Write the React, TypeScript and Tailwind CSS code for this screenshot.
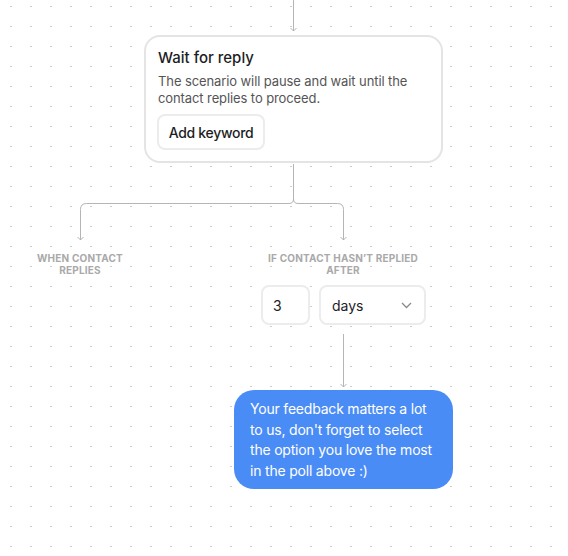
import React from "react";

const font = { fontFamily: "Inter, 'Noto Sans', sans-serif" };

function Connectors() {
  const c = "#b5b5b5";
  return (
    <svg className="absolute inset-0 pointer-events-none" width="568" height="556" fill="none">
      <path d="M293.5 0 V31" stroke={c} />
      <path d="M290.5 28 L293.5 31 L296.5 28" stroke={c} />
      <path d="M293.5 164 V199 Q293.5 203.5 289 203.5 H86.5 Q80.5 203.5 80.5 209.5 V240" stroke={c} />
      <path d="M293.5 199 Q293.5 203.5 298 203.5 H337.5 Q343.5 203.5 343.5 209.5 V240" stroke={c} />
      <path d="M77.5 237 L80.5 240 L83.5 237" stroke={c} />
      <path d="M340.5 237 L343.5 240 L346.5 237" stroke={c} />
      <path d="M343.5 334 V387" stroke={c} />
      <path d="M340.5 384 L343.5 387 L346.5 384" stroke={c} />
    </svg>
  );
}

function DotGrid() {
  return (
    <svg className="absolute inset-0" width="568" height="556">
      <defs>
        <pattern id="dots" x="0" y="0" width="20" height="20" patternUnits="userSpaceOnUse">
          <rect x="10" y="6" width="2" height="1" fill="#cdcdcd" />
        </pattern>
      </defs>
      <rect width="568" height="556" fill="url(#dots)" />
    </svg>
  );
}

export default function App() {
  return (
    <div className="relative w-[568px] h-[556px] bg-white overflow-hidden" style={font}>
      <DotGrid />
      <Connectors />

      {/* Wait for reply node */}
      <div className="absolute left-[144px] top-[35px] w-[299px] h-[128px] rounded-[16px] border-2 border-[#e4e4e4] bg-white px-[12px] pt-[10px] flex flex-col">
        <div className="text-[15px] leading-[22px] font-medium text-[#1d1d1f]">Wait for reply</div>
        <div className="mt-[4px] text-[13px] leading-[17px] text-[#555555] tracking-[-0.1px] whitespace-nowrap">
          The scenario will pause and wait until the
          <br />
          contact replies to proceed.
        </div>
        <div className="mt-[7px] flex">
          <button className="h-[36px] w-[108px] -ml-[1px] rounded-[8px] border-2 border-[#ececec] bg-white text-[14px] font-medium text-[#1d1d1f] tracking-[-0.3px]">
            Add keyword
          </button>
        </div>
      </div>

      {/* Branch labels */}
      <div className="absolute left-[20px] top-[252px] w-[120px] text-center text-[10px] leading-[12px] font-bold tracking-[0.2px] text-[#a9a9a9] uppercase">
        When contact
        <br />
        replies
      </div>
      <div className="absolute left-[243px] top-[252px] w-[200px] text-center text-[10px] leading-[12px] font-bold tracking-[0.2px] text-[#a9a9a9] uppercase">
        If contact hasn’t replied
        <br />
        after
      </div>

      {/* Delay inputs */}
      <div className="absolute left-[261px] top-[285px] flex gap-[9px]">
        <div className="w-[49px] h-[40px] rounded-[8px] border-2 border-[#ececec] bg-white flex items-center pl-[10px] text-[14px] text-[#1d1d1f]">
          3
        </div>
        <div className="w-[107px] h-[40px] rounded-[8px] border-2 border-[#ececec] bg-white flex items-center justify-between pl-[11px] pr-[12px] text-[14px] text-[#1d1d1f]">
          <span>days</span>
          <svg width="11" height="7" viewBox="0 0 11 7" fill="none">
            <path d="M1 1 L5.5 5.5 L10 1" stroke="#8a8a8a" strokeWidth="1.3" />
          </svg>
        </div>
      </div>

      {/* Message bubble */}
      <div className="absolute left-[234px] top-[390px] w-[219px] h-[99px] rounded-[20px] bg-[#4a8cf6] px-[16px] pt-[9px] text-[14px] leading-[20.5px] text-white whitespace-nowrap tracking-[-0.2px]">
        Your feedback matters a lot
        <br />
        to us, don't forget to select
        <br />
        the option you love the most
        <br />
        in the poll above :)
      </div>
    </div>
  );
}
